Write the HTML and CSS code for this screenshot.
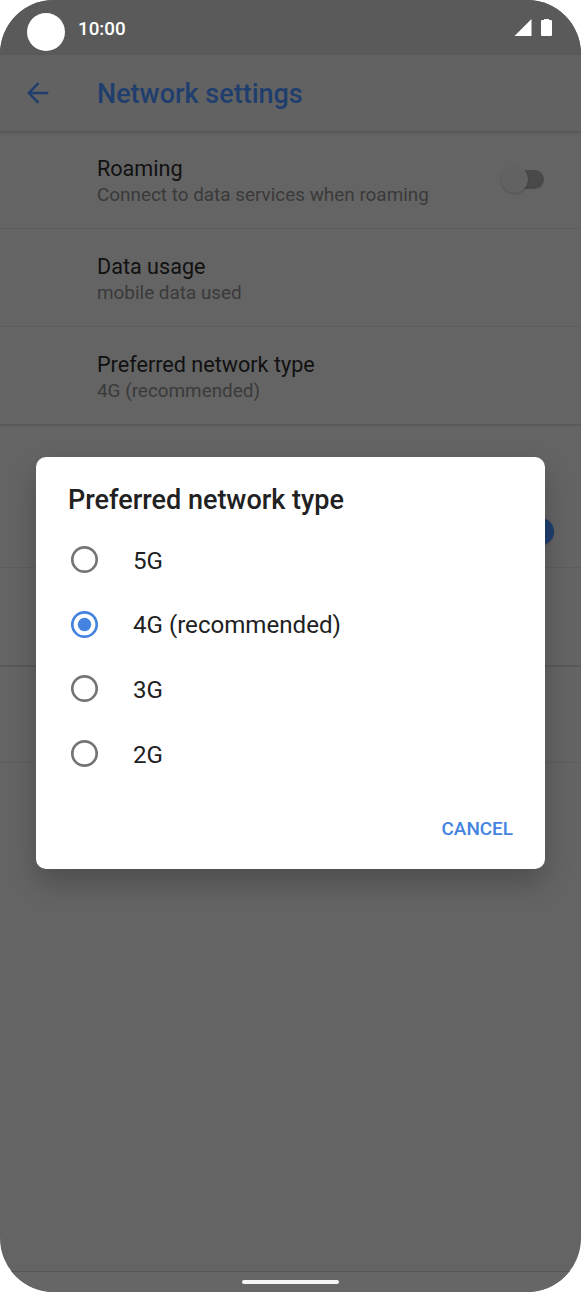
FILE: index.html
```html
<!DOCTYPE html>
<html lang="en">
<head>
<meta charset="utf-8">
<title>Network settings</title>
<link rel="stylesheet" href="styles.css">
</head>
<body>
<div class="phone">
  <div class="status-bar">
    <span class="camera"></span>
    <span class="clock">10:00</span>
    <svg class="signal" width="18" height="18" viewBox="0 0 18 18"><path d="M17.500 0V17H0.500Z" fill="#fff"/></svg>
    <svg class="battery" width="11" height="18" viewBox="0 0 11 18"><path d="M3 1V0H8V1H10Q11 1 11 2V16Q11 17 10 17H1Q0 17 0 16V2Q0 1 1 1Z" fill="#fff"/></svg>
  </div>
  <header class="app-bar">
    <svg class="back" width="22" height="22" viewBox="0 0 22 22" fill="none" stroke="#1f3e6e" stroke-width="2.400"><path d="M21.300 11H2M11.500 1.200L1.800 11L11.500 20.800"/></svg>
    <h1 class="title">Network settings</h1>
  </header>
  <main class="list">
    <section class="row">
      <div class="row-text"><div class="name">Roaming</div><div class="summary">Connect to data services when roaming</div></div>
      <span class="switch"><span class="thumb"></span></span>
    </section>
    <section class="row">
      <div class="row-text"><div class="name">Data usage</div><div class="summary">mobile data used</div></div>
    </section>
    <section class="row group-end">
      <div class="row-text"><div class="name">Preferred network type</div><div class="summary">4G (recommended)</div></div>
    </section>
    <section class="row switch-row"><span class="switch on"><span class="thumb"></span></span></section>
    <section class="row group-end"></section>
    <section class="row short-row"></section>
  </main>
  <footer class="nav-bar"><span class="handle"></span></footer>
  <div class="dialog" role="dialog">
    <h2 class="dialog-title">Preferred network type</h2>
    <div class="options">
      <div class="option"><svg class="radio" viewBox="0 0 27 27"><circle class="ring" cx="13.500" cy="13.500" r="12.200"/></svg><span class="label">5G</span></div>
      <div class="option"><svg class="radio checked" viewBox="0 0 27 27"><circle class="ring" cx="13.500" cy="13.500" r="12.200"/><circle class="dot" cx="13.500" cy="13.500" r="6.700"/></svg><span class="label">4G (recommended)</span></div>
      <div class="option"><svg class="radio" viewBox="0 0 27 27"><circle class="ring" cx="13.500" cy="13.500" r="12.200"/></svg><span class="label">3G</span></div>
      <div class="option"><svg class="radio" viewBox="0 0 27 27"><circle class="ring" cx="13.500" cy="13.500" r="12.200"/></svg><span class="label">2G</span></div>
    </div>
    <div class="actions"><span class="cancel">CANCEL</span></div>
  </div>
</div>
</body>
</html>
```

FILE: styles.css
```css
* { box-sizing: border-box; }
body { margin: 0; background: #fff; font-family: Roboto, sans-serif; }
.phone {
  position: relative;
  width: 581px;
  height: 1292px;
  display: flex;
  flex-direction: column;
  overflow: hidden;
  border-radius: 54px;
  background: #646464;
}
.status-bar {
  height: 55px;
  flex: none;
  display: flex;
  align-items: flex-start;
  padding: 13px 29px 0 27px;
  background: #5a5a5a;
  color: #fff;
}
.camera { width: 38px; height: 38px; border-radius: 50%; background: #fff; }
.clock { margin: 4px auto 0 13px; font-size: 18.8px; line-height: 24px; font-weight: 500; }
.signal { margin: 6px 9px 0 0; }
.battery { margin-top: 6px; }
.app-bar {
  height: 76px;
  flex: none;
  display: flex;
  align-items: center;
  padding-left: 27px;
  background: #626262;
  box-shadow: 0 2px 3px rgba(0, 0, 0, .15);
}
.title { margin: 2px 0 0 48px; font-size: 27px; line-height: 32px; font-weight: 500; color: #1f3e6e; }
.list { flex: 1; }
.row {
  height: 98px;
  display: flex;
  align-items: flex-start;
  justify-content: space-between;
  padding: 24px 37px 0 97px;
  border-bottom: 1px solid #5d5d5d;
}
.group-end { height: 99px; border-bottom: 2px solid #595959; }
.name { font-size: 21.6px; line-height: 27px; color: #111; white-space: nowrap; }
.summary { font-size: 18.9px; line-height: 26px; color: #3a3a3a; white-space: nowrap; }
.switch {
  display: flex;
  align-items: center;
  width: 34px;
  height: 19px;
  margin-top: 15px;
  border-radius: 10px;
  background: #494949;
}
.thumb { flex: none; width: 27px; height: 27px; margin-left: -9px; border-radius: 50%; background: #626262; box-shadow: 0 1px 2px rgba(0, 0, 0, .2); }
.switch-row { height: 142px; padding: 81px 27px 0 0; justify-content: flex-end; }
.on { background: #263c5d; justify-content: flex-end; }
.on .thumb { background: #1f3e6e; }
.short-row { height: 96px; }
.nav-bar { height: 21px; flex: none; border-top: 1px solid #565656; background: #666; display: flex; justify-content: center; padding-top: 8px; }
.handle { width: 97px; height: 4px; border-radius: 2px; background: #f5f5f5; }
.dialog {
  position: absolute;
  top: 457px;
  left: 36px;
  width: 509px;
  height: 412px;
  display: flex;
  flex-direction: column;
  padding: 27px 32px 0;
  border-radius: 10px;
  background: #fff;
  color: #212121;
  box-shadow: 0 14px 28px rgba(0, 0, 0, .22);
}
.dialog-title { margin: 0; font-size: 27px; line-height: 32px; font-weight: 500; }
.options { margin-top: 11.5px; }
.option { height: 64.6px; display: flex; align-items: center; gap: 35px; padding-left: 3px; font-size: 24.1px; }
.label { padding-top: 2px; }
.radio { width: 27px; height: 27px; overflow: visible; }
.ring { fill: none; stroke: #757575; stroke-width: 2.7; }
.checked .ring { stroke: #4484e0; }
.dot { fill: #4484e0; }
.actions { display: flex; justify-content: flex-end; margin-top: 31.5px; }
.cancel { font-size: 18.9px; line-height: 24px; font-weight: 500; color: #4484e0; }
```
